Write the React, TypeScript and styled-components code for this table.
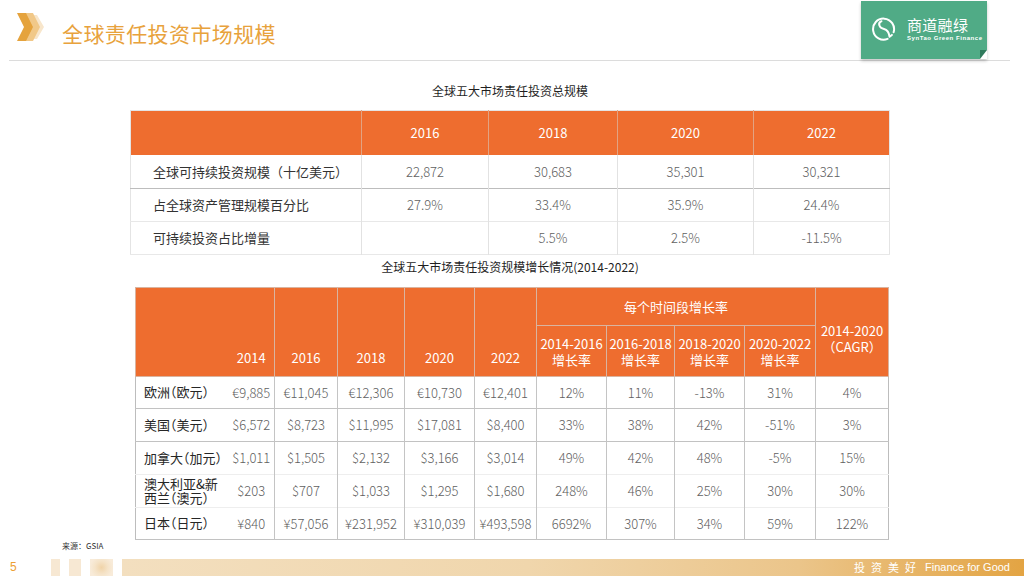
import styled, { createGlobalStyle } from "styled-components";

const GlobalStyle = createGlobalStyle`
  html, body {
    margin: 0;
    padding: 0;
    background: #ffffff;
  }
  body {
    font-family: "Noto Sans CJK SC", "Noto Sans", sans-serif;
  }
`;

const ORANGE = "#EE6D2F";
const GOLD = "#E8A23C";

const totals = {
  years: ["2016", "2018", "2020", "2022"],
  rows: [
    { label: "全球可持续投资规模（十亿美元）", values: ["22,872", "30,683", "35,301", "30,321"], line: "strong" },
    { label: "占全球资产管理规模百分比", values: ["27.9%", "33.4%", "35.9%", "24.4%"], line: "faint" },
    { label: "可持续投资占比增量", values: ["", "5.5%", "2.5%", "-11.5%"], line: "faint" },
  ],
};

const growthYears = ["2014", "2016", "2018", "2020", "2022"];
const growthPeriods = ["2014-2016", "2016-2018", "2018-2020", "2020-2022"];

const growth = [
  {
    label: ["欧洲（欧元）"],
    values: ["€9,885", "€11,045", "€12,306", "€10,730", "€12,401"],
    rates: ["12%", "11%", "-13%", "31%"],
    cagr: "4%",
    h: 32,
    line: "strong",
  },
  {
    label: ["美国（美元）"],
    values: ["$6,572", "$8,723", "$11,995", "$17,081", "$8,400"],
    rates: ["33%", "38%", "42%", "-51%"],
    cagr: "3%",
    h: 33,
    line: "strong",
  },
  {
    label: ["加拿大（加元）"],
    values: ["$1,011", "$1,505", "$2,132", "$3,166", "$3,014"],
    rates: ["49%", "42%", "48%", "-5%"],
    cagr: "15%",
    h: 33,
    line: "faint",
  },
  {
    label: ["澳大利亚&新", "西兰（澳元）"],
    values: ["$203", "$707", "$1,033", "$1,295", "$1,680"],
    rates: ["248%", "46%", "25%", "30%"],
    cagr: "30%",
    h: 33,
    line: "faint",
  },
  {
    label: ["日本（日元）"],
    values: ["¥840", "¥57,056", "¥231,952", "¥310,039", "¥493,598"],
    rates: ["6692%", "307%", "34%", "59%"],
    cagr: "122%",
    h: 32,
    line: "strong",
  },
];

const Chevron = () => (
  <ChevronSvg viewBox="0 0 31 28" width="31" height="28">
    <polygon points="13,2 20,2 27,14 20,26 13,26 18,14" fill="#F8E6CB" />
    <polygon points="7,0 16,0 23,14 16,28 7,28 14,14" fill="#F1C888" />
    <polygon points="0,0 9,0 16,14 9,28 0,28 7,14" fill="#E5A33D" />
  </ChevronSvg>
);

const LogoMark = () => (
  <svg viewBox="0 0 24 24" width="24" height="24" fill="none">
    <path
      d="M21.6 15.2 A10.5 10.5 0 1 0 15.6 21.8"
      stroke="#fff"
      strokeWidth="2"
      strokeLinecap="round"
    />
    <path
      d="M9.5 4.2 C5.2 6.3 7.3 11 12 12 C16 13 17 15.5 17.6 19.8 L19.9 17.9"
      stroke="#fff"
      strokeWidth="2"
      strokeLinecap="round"
      strokeLinejoin="round"
    />
  </svg>
);

export default function App() {
  return (
    <>
      <GlobalStyle />
      <Page>
        <Header>
          <Brand>
            <Chevron />
            <PageTitle>全球责任投资市场规模</PageTitle>
          </Brand>
          <Logo>
            <LogoMark />
            <LogoText>
              <LogoName>商道融绿</LogoName>
              <LogoSub>SynTao Green Finance</LogoSub>
            </LogoText>
          </Logo>
        </Header>
        <Rule />

        <Main>
          <TableTitle $top={20}>全球五大市场责任投资总规模</TableTitle>
          <TotalsTable>
            <colgroup>
              <Col $w={231} />
              <Col $w={127} />
              <Col $w={129} />
              <Col $w={136} />
              <Col $w={136} />
            </colgroup>
            <thead>
              <tr>
                <TotalsHead />
                {totals.years.map((y) => (
                  <TotalsHead key={y}>{y}</TotalsHead>
                ))}
              </tr>
            </thead>
            <tbody>
              {totals.rows.map((r) => (
                <TotalsRow key={r.label} $line={r.line}>
                  <TotalsLabel>{r.label}</TotalsLabel>
                  {r.values.map((v, i) => (
                    <TotalsNum key={i}>{v}</TotalsNum>
                  ))}
                </TotalsRow>
              ))}
            </tbody>
          </TotalsTable>

          <TableTitle $top={2}>全球五大市场责任投资规模增长情况(2014-2022)</TableTitle>
          <GrowthTable>
            <colgroup>
              <Col $w={93} />
              <Col $w={46} />
              <Col $w={63} />
              <Col $w={67} />
              <Col $w={70} />
              <Col $w={62} />
              <Col $w={70} />
              <Col $w={68} />
              <Col $w={70} />
              <Col $w={71} />
              <Col $w={73} />
            </colgroup>
            <thead>
              <HeadRow $h={38}>
                <GrowthHead rowSpan={2} $noRight />
                {growthYears.map((y, i) => (
                  <YearHead key={y} rowSpan={2} $noLeft={i === 0}>
                    {y}
                  </YearHead>
                ))}
                <GrowthHead colSpan={4}>每个时间段增长率</GrowthHead>
                <CagrHead rowSpan={2}>
                  2014-2020
                  <br />
                  （CAGR）
                </CagrHead>
              </HeadRow>
              <HeadRow $h={51}>
                {growthPeriods.map((p) => (
                  <PeriodHead key={p}>
                    {p}
                    <br />
                    增长率
                  </PeriodHead>
                ))}
              </HeadRow>
            </thead>
            <tbody>
              {growth.map((r) => (
                <GrowthRow key={r.label.join("")} $h={r.h} $line={r.line}>
                  <RegionCell>
                    {r.label.map((l, i) => (
                      <span key={i}>
                        {i > 0 && <br />}
                        {l}
                      </span>
                    ))}
                  </RegionCell>
                  {r.values.map((v, i) => (
                    <ValueCell key={i} $noLeft={i === 0}>
                      {v}
                    </ValueCell>
                  ))}
                  {r.rates.map((v, i) => (
                    <ValueCell key={"r" + i}>{v}</ValueCell>
                  ))}
                  <ValueCell>{r.cagr}</ValueCell>
                </GrowthRow>
              ))}
            </tbody>
          </GrowthTable>
          <Source>来源：GSIA</Source>
        </Main>

        <Footer>
          <PageNum>5</PageNum>
          <Tile $w={9} />
          <Tile $w={12} />
          <Tile $w={23} $glow />
          <FooterBar>
            <Slogan>
              <Spaced>投资美好</Spaced>
              <Latin>Finance for Good</Latin>
            </Slogan>
          </FooterBar>
        </Footer>
      </Page>
    </>
  );
}

const Page = styled.div`
  width: 1024px;
  height: 576px;
  overflow: hidden;
  display: flex;
  flex-direction: column;
  background: #ffffff;
`;

const Header = styled.header`
  height: 60px;
  display: flex;
  justify-content: space-between;
  align-items: flex-start;
  padding: 0 37px 0 17px;
`;

const Brand = styled.div`
  display: flex;
  align-items: flex-start;
  gap: 14px;
`;

const ChevronSvg = styled.svg`
  margin-top: 13px;
  flex-shrink: 0;
`;

const PageTitle = styled.h1`
  margin: 18px 0 0;
  font-size: 21px;
  line-height: 30px;
  font-weight: 400;
  letter-spacing: 0.4px;
  color: ${GOLD};
`;

const Logo = styled.div`
  position: relative;
  width: 126px;
  height: 58px;
  margin-top: 1px;
  box-sizing: border-box;
  padding: 0 0 2px 11px;
  display: flex;
  align-items: center;
  gap: 11px;
  background: #50AB86;
  box-shadow: 0 2px 3px rgba(0, 0, 0, 0.22);

  &::after {
    content: "";
    position: absolute;
    right: 0;
    bottom: 0;
    border-style: solid;
    border-width: 0 0 9px 7px;
    border-color: transparent transparent #ffffff #2F7A5C;
  }
`;

const LogoText = styled.div`
  display: flex;
  flex-direction: column;
  gap: 2px;
`;

const LogoName = styled.span`
  font-size: 15px;
  line-height: 16px;
  color: #ffffff;
  letter-spacing: 0.3px;
`;

const LogoSub = styled.span`
  font-family: "Liberation Sans", Arial, sans-serif;
  font-size: 6px;
  line-height: 7px;
  font-weight: 700;
  color: #ffffff;
  letter-spacing: 0.55px;
  white-space: nowrap;
`;

const Rule = styled.div`
  height: 1px;
  margin: 0 14px 0 9px;
  background: #dcdcdc;
`;

const Main = styled.main`
  display: flex;
  flex-direction: column;
  align-items: flex-start;
`;

const TableTitle = styled.div<{ $top: number }>`
  align-self: stretch;
  margin-top: ${(p) => p.$top}px;
  height: 20px;
  line-height: 20px;
  padding-right: 4px;
  text-align: center;
  font-size: 12px;
  font-weight: 400;
  color: #1f1f1f;
`;

const Col = styled.col<{ $w: number }>`
  width: ${(p) => p.$w}px;
`;

const TotalsTable = styled.table`
  margin: 9px 0 0 130px;
  width: 759px;
  table-layout: fixed;
  border-collapse: collapse;
  border: 1px solid #e4e4e4;
`;

const TotalsHead = styled.th`
  height: 42px;
  padding: 0 0 2px;
  background: ${ORANGE};
  color: #ffffff;
  font-size: 13px;
  font-weight: 400;
  text-align: center;
  border-left: 1px solid #e2a382;
  &:first-child {
    border-left: none;
  }
`;

const TotalsRow = styled.tr<{ $line: string }>`
  height: 33px;
  border-bottom: 1px solid ${(p) => (p.$line === "strong" ? "#bdbdbd" : "#e8e8e8")};
`;

const TotalsLabel = styled.td`
  padding: 0 0 0 22px;
  font-size: 13px;
  color: #333333;
  white-space: nowrap;
`;

const TotalsNum = styled.td`
  padding: 0;
  text-align: center;
  font-size: 13px;
  font-weight: 300;
  color: #5f5f5f;
  border-left: 1px solid #e2e2e2;
`;

const GrowthTable = styled.table`
  margin: 10px 0 0 135px;
  width: 753px;
  table-layout: fixed;
  border-collapse: collapse;
  border: 1px solid #bdbdbd;
`;

const HeadRow = styled.tr<{ $h: number }>`
  height: ${(p) => p.$h}px;
`;

const GrowthHead = styled.th<{ $noRight?: boolean }>`
  padding: 0;
  background: ${ORANGE};
  color: #ffffff;
  font-size: 13px;
  font-weight: 400;
  text-align: center;
  border: 1px solid #d9b4a0;
  ${(p) => (p.$noRight ? "border-right: none;" : "")}
`;

const YearHead = styled(GrowthHead)<{ $noLeft?: boolean }>`
  vertical-align: bottom;
  padding-bottom: 9px;
  ${(p) => (p.$noLeft ? "border-left: none;" : "")}
`;

const PeriodHead = styled(GrowthHead)`
  line-height: 16px;
  padding-top: 2px;
`;

const CagrHead = styled(GrowthHead)`
  line-height: 16px;
  padding-top: 14px;
`;

const GrowthRow = styled.tr<{ $h: number; $line: string }>`
  height: ${(p) => p.$h}px;
  border-bottom: 1px solid ${(p) => (p.$line === "strong" ? "#c2c2c2" : "#eeeeee")};
`;

const RegionCell = styled.td`
  padding: 0 0 0 8px;
  font-size: 13px;
  line-height: 14px;
  color: #262626;
  white-space: nowrap;
  font-feature-settings: "halt";
`;

const ValueCell = styled.td<{ $noLeft?: boolean }>`
  padding: 0 1px;
  text-align: center;
  font-size: 13px;
  font-weight: 300;
  color: #5f5f5f;
  white-space: nowrap;
  border-left: ${(p) => (p.$noLeft ? "none" : "1px solid #c4c4c4")};
`;

const Source = styled.div`
  margin: 1px 0 0 62px;
  font-size: 8px;
  line-height: 10px;
  color: #333333;
`;

const Footer = styled.footer`
  margin-top: auto;
  height: 17px;
  display: flex;
  align-items: stretch;
  gap: 9px;
  padding-left: 10px;
`;

const PageNum = styled.span`
  width: 32px;
  font-family: "Liberation Sans", Arial, sans-serif;
  font-size: 12px;
  line-height: 17px;
  color: #EDA033;
`;

const Tile = styled.div<{ $w: number; $glow?: boolean }>`
  width: ${(p) => p.$w}px;
  background: ${(p) =>
    p.$glow
      ? "radial-gradient(circle at 50% 50%, #F0D3A8 0%, #F5E3C8 45%, #F8EBD9 80%)"
      : "#F7E8D3"};
`;

const FooterBar = styled.div`
  flex: 1;
  display: flex;
  justify-content: flex-end;
  align-items: center;
  padding-right: 14px;
  background: linear-gradient(90deg, #F3DFBF 0%, #F0D6AC 45%, #EBC58A 75%, #E3A443 100%);
`;

const Slogan = styled.span`
  display: flex;
  align-items: center;
  gap: 3px;
  font-size: 11px;
  line-height: 17px;
  color: #ffffff;
  white-space: nowrap;
`;

const Spaced = styled.span`
  letter-spacing: 6px;
`;

const Latin = styled.span`
  font-family: "Liberation Sans", Arial, sans-serif;
`;
